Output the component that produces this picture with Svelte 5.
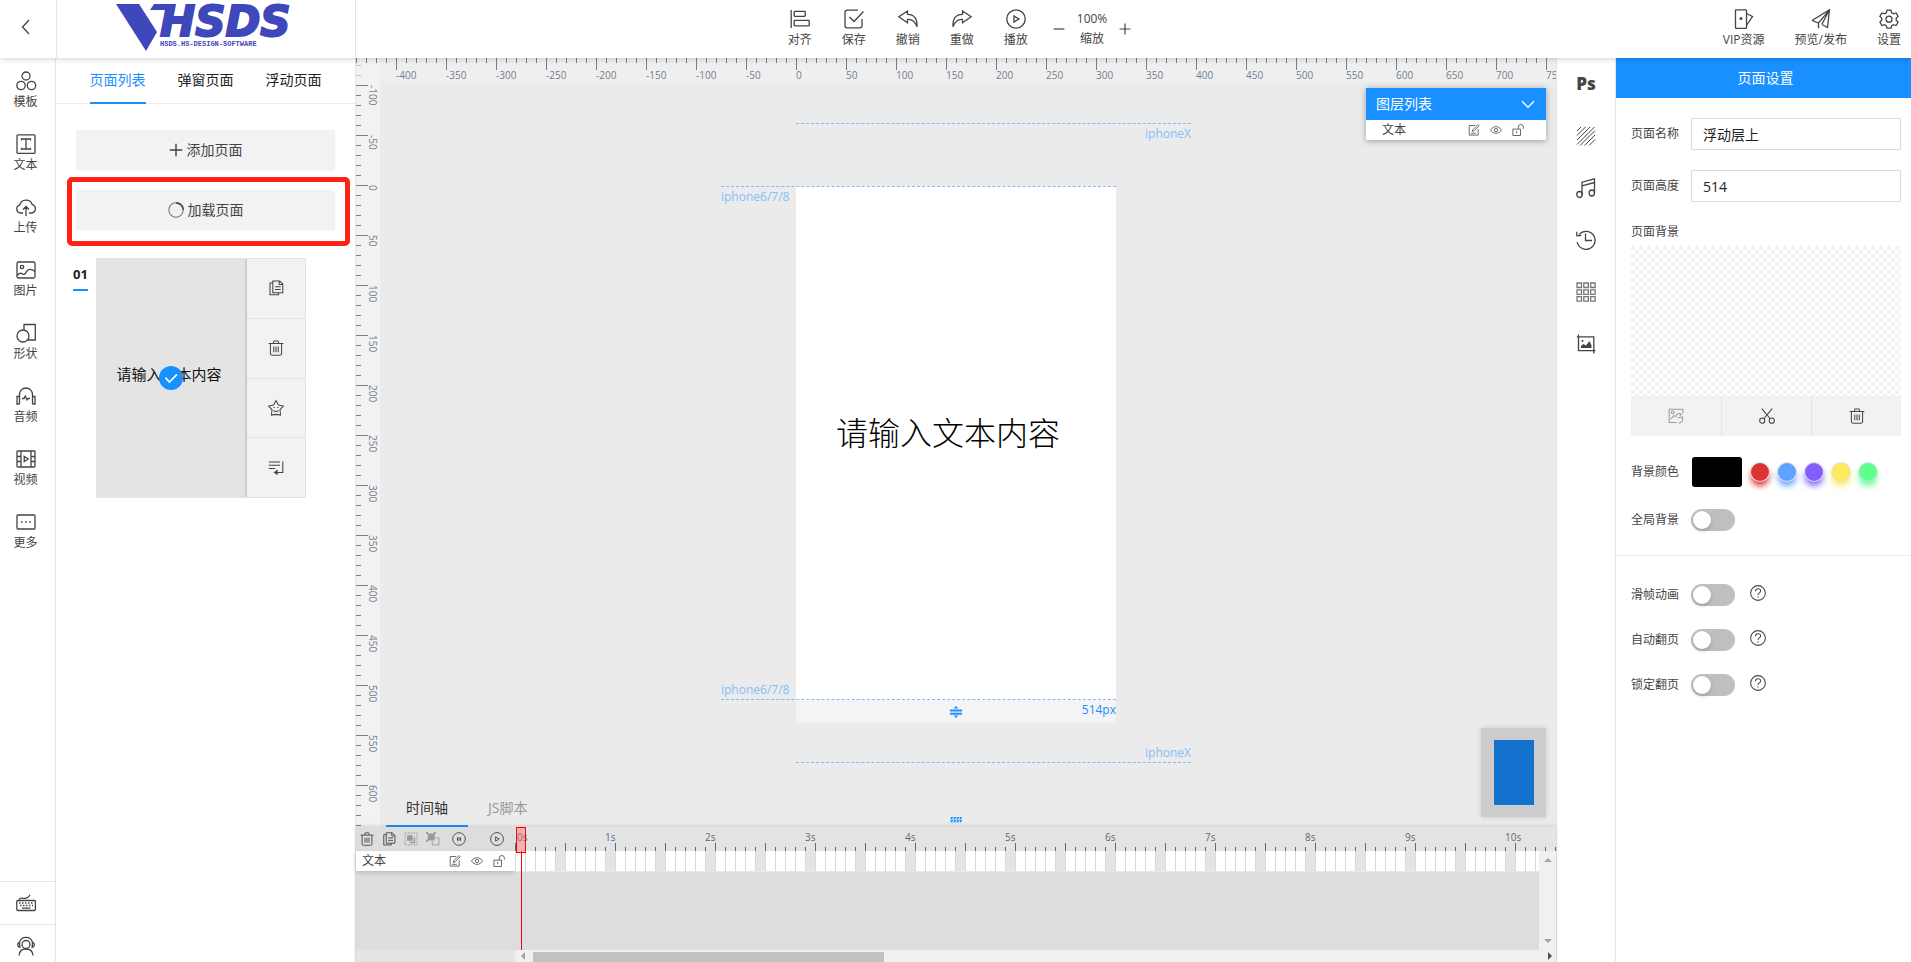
<script>
  const icons = {
    back: '<path d="M13 3L6.500 10l6.500 7"/>',
    template:
      '<circle cx="10" cy="5" r="4"/><circle cx="5" cy="14.500" r="4.200"/><circle cx="15.500" cy="14.500" r="4.200"/>',
    text: '<rect x="1" y="0.800" width="18" height="18.600" rx="1"/><path d="M5.500 6.500V5h9v1.500M10 5v10M5.500 13.800V15h9v-1.200"/>',
    upload:
      '<path d="M7 16H4.500A4 4 0 0 1 3.600 8.200 6.600 6.600 0 0 1 16.300 7.600 4.300 4.300 0 0 1 15.500 16H13M10 19v-9M7 12.500l3-3 3 3"/>',
    image:
      '<rect x="1" y="2" width="18" height="16" rx="1.500"/><circle cx="6" cy="7" r="1.700"/><path d="M1 15.500c2-2.500 3.500-3 5.500-1.500s3-1 4.500-3 4-2.500 8 .5"/>',
    shape: '<circle cx="7" cy="13" r="6"/><path d="M8 7V1.500h11.300V17H12"/>',
    audio:
      '<path d="M3.500 18V8.500a6.500 6.500 0 0 1 13 0V18M3.500 10.500H1V18h2.500M16.500 10.500H19V18h-2.500M6 12.500h2l1.300-2.500 1.700 4 1-1.500h2"/>',
    video:
      '<rect x="1" y="2" width="18" height="16" rx="0.800"/><path d="M5 2v16M15 2v16M1 7.500h4M1 12.500h4M15 7.500h4M15 12.500h4M8.200 7.500v5l4-2.500z"/>',
    more: '<rect x="1" y="3" width="18" height="14" rx="1"/><path class="fill" d="M5 9.200h1.600v1.600H5zM9.200 9.200h1.600v1.600H9.200zM13.400 9.200H15v1.600h-1.600z"/>',
    keyboard:
      '<rect x="0.800" y="7.500" width="18.600" height="10" rx="1"/><path d="M3 7.500c.5-3 2-2.500 4-2.200s5 .5 7-3.500M6 15.200h8.500"/><path stroke-dasharray="1.500 1.500" d="M3 10h14.500M4 12.500h13"/>',
    service:
      '<circle cx="10" cy="8.500" r="4"/><path d="M3 19.500c.3-4 3-6.500 7-6.500s6.700 2.500 7 6.500M3.500 6.500a6.700 6.700 0 0 1 13 0M3.500 6.200c-2.500.8-2.500 4.500.3 5.300zM16.500 6.200c2.500.8 2.500 4.500-.3 5.300z"/>',
    align:
      '<path d="M1.200 1v18"/><rect x="4.200" y="2.300" width="11" height="5" rx="0.500"/><rect x="4.200" y="11.300" width="15" height="5.600" rx="0.500"/>',
    save: '<path d="M14 1.200H3a2 2 0 0 0-2 2v13.600a2 2 0 0 0 2 2h13a2 2 0 0 0 2-2V10M5.500 8l4.500 4.500L19.500 2.500"/>',
    undo: '<path d="M9.500 2L.8 7.800l8.700 6V10.500c4.500-.5 7.500 2 9.500 7.200C19.500 9.500 16 5.300 9.500 5.300z"/>',
    redo: '<path d="M10.500 2l8.700 5.800-8.700 6V10.500c-4.500-.5-7.500 2-9.500 7.200C.5 9.500 4 5.300 10.500 5.300z"/>',
    play: '<circle cx="10" cy="10" r="9.200"/><path d="M8 7v6l5-3z"/>',
    pause: '<circle cx="10" cy="10" r="9"/><path d="M8.200 7.500v5M11.800 7.500v5" stroke-width="2"/>',
    minus: '<path stroke-width="2" d="M1 10h18"/>',
    plus: '<path stroke-width="2" d="M1 10h18M10 1v18"/>',
    vip: '<rect x="1.500" y="0.800" width="11" height="18.500" rx="0.500"/><path d="M12.500 4.500l6 3-6 9"/><circle class="fill" cx="7" cy="9.500" r="1.500"/>',
    send: '<path d="M1 11.500L18.500.8 16.500 18.500l-5-2.800M1 11.500l6.500 2.500L18.500.8M7.500 14v5.200M18.500.8L10.800 15.500"/>',
    gear: '<path d="M8 1.200h4l.7 2.600 1.800 1 2.600-.8 2 3.500-1.900 1.800v1.900l1.900 1.800-2 3.500-2.600-.8-1.800 1-.7 2.500H8l-.7-2.500-1.800-1-2.600.8-2-3.500 1.900-1.800V9.300L.9 7.500 2.900 4l2.600.8 1.800-1z"/><circle cx="10" cy="10.200" r="3"/>',
    spin: '<path d="M19 10a9 9 0 1 1-9-9" stroke-opacity="0.700"/><path d="M10 1a9 9 0 0 1 9 9" stroke-width="2.200"/>',
    copy: '<path d="M6 3.800H2.500v14.700h10.700V16"/><path d="M6 1.200h8.500L18.500 5v11H6zM14 1.200V5.500h4.500M8.800 8.500h7M8.800 12h7"/>',
    trash:
      '<path d="M.8 4.500h18.400M3 4.500V17a2 2 0 0 0 2 2h10a2 2 0 0 0 2-2V4.500M6.500 4.200L7.500 1.200h5l1 3M7.200 8.200v7M10 8.200v7M12.800 8.200v7"/>',
    star: '<path d="M10 .8l3 5.400 6.200 1.300-4.200 4.700.7 6.600-5.700-.8-5.700.8.700-6.600L.8 7.500 7 6.200z"/><path d="M7 9.500h1.500M11.500 9.500H13M7 13c1.500 1.800 4.500 1.800 6 0"/>',
    insert:
      '<path d="M1 2.500h14M1 6.500h14M1 10.500h8M18.500 1.500v14h-8"/><path class="fill" d="M7 15.500l5-3.500v7z"/>',
    check: '<path d="M3 9.500l5 5.500 9.500-9.500"/>',
    down: '<path d="M1.500 6l8.500 8.500L18.500 6"/>',
    edit: '<path d="M12 2.500H2v16h15V9M8 9.500L16.500 1l2 2L10 11.500l-2.800 1zM5 15.500h8"/>',
    eye: '<path d="M.8 10C5.500 2.500 14.500 2.500 19.200 10c-4.700 7.500-13.700 7.500-18.400 0z"/><circle cx="10" cy="10" r="2.800"/>',
    unlock: '<rect x="1.500" y="8.500" width="12.500" height="10.500"/><path d="M10.500 8.500V5a4.200 4.200 0 0 1 8.400 0v3M7.800 11.500v4"/>',
    group:
      '<path stroke-dasharray="2.500 1.500" d="M1.500 1.500h17v17h-17z"/><path class="fill" d="M4.500 4.500h8v8h-8zM14 8v6H8v2h8V8z"/>',
    ungroup:
      '<path class="fill" d="M2.500 2h10v10h-10zM0 0h3v3H0zM11 0h3v3h-3zM0 11h3v3H0z"/><path d="M14 8.500h4.500V18.500H9v-5"/>',
    hatch: '<path d="M1 5l4-4M1 9.500L9.500 1M1 14L14 1M1 18.500L18.500 1M4 19.500L19 4.500M8.500 19.500L19 9M13 19.500l6-6"/>',
    music:
      '<path d="M6 17V4.200L18.500.8V15M6 7.800l12.500-3.300"/><ellipse cx="3.500" cy="16.500" rx="2.700" ry="3"/><ellipse cx="15.800" cy="15" rx="2.700" ry="3"/>',
    history: '<path d="M3.200 4.500a9 9 0 1 1-2 7.500M9.500 3.500v7h6.500M.8 1.800v3.800h4.500"/>',
    grid: '<path d="M1 1h4.500v4.500H1zM7.800 1h4.500v4.500H7.800zM14.600 1h4.500v4.500h-4.500zM1 7.800h4.500v4.500H1zM7.800 7.800h4.500v4.500H7.800zM14.600 7.800h4.500v4.500h-4.500zM1 14.600h4.500v4.500H1zM7.800 14.600h4.500v4.500H7.800zM14.600 14.600h4.500v4.500h-4.500z"/>',
    crop: '<path d="M.8 2.800h17v14.400M2.500.5v16.200h17M17.800 17v2.500"/><path class="fill" d="M5 14v-2l2.500-2 2.500 1.500L13.500 7l2 4.500V14z"/><circle class="fill" cx="6.500" cy="7" r="1"/>',
    replace:
      '<path d="M11 18H1.500V1.500h17V7M3.500 14l4-4.500 3 1.500"/><circle cx="6" cy="5.500" r="1.700"/><path d="M10 10c1-3.500 5-4 6.500-2l-2 2M12 12.500l6-1.500c1.500 4-.5 7-4.500 8"/>',
    scissors:
      '<path d="M3.500.8l10.800 13M16.500.8L5.700 13.800"/><circle cx="4" cy="15.800" r="3.200"/><circle cx="16" cy="15.800" r="3.200"/>',
    help: '<circle cx="10" cy="10" r="9.200"/><path d="M6.800 7.800c0-4.300 6.500-4.200 6.500-.4 0 2.500-3.300 2.500-3.300 5.100M10 14v1.500"/>',
    resize:
      '<path stroke-width="3.300" d="M0 7.500h20M0 12.800h20"/><path class="fill" d="M10 0l4 4H6zM10 20l4-4H6z"/>'
  };

  const navItems = [
    { icon: 'template', label: '模板' },
    { icon: 'text', label: '文本' },
    { icon: 'upload', label: '上传' },
    { icon: 'image', label: '图片' },
    { icon: 'shape', label: '形状' },
    { icon: 'audio', label: '音频' },
    { icon: 'video', label: '视频' },
    { icon: 'more', label: '更多' }
  ];

  const actions = [
    { icon: 'align', label: '对齐' },
    { icon: 'save', label: '保存' },
    { icon: 'undo', label: '撤销' },
    { icon: 'redo', label: '重做' },
    { icon: 'play', label: '播放' }
  ];

  const publishActions = [
    { icon: 'vip', label: 'VIP资源' },
    { icon: 'send', label: '预览/发布' },
    { icon: 'gear', label: '设置' }
  ];

  const pageActions = [
    { icon: 'copy', label: '复制' },
    { icon: 'trash', label: '删除' },
    { icon: 'star', label: '收藏' },
    { icon: 'insert', label: '插入' }
  ];

  const tools = ['hatch', 'music', 'history', 'grid', 'crop'];
  const swatches = ['#db3232', '#5ea2ff', '#825eff', '#ffe95c', '#5eff8f'];
  const pageTabs = ['页面列表', '弹窗页面', '浮动页面'];
  const turnOptions = ['滑帧动画', '自动翻页', '锁定翻页'];

  // the first mark of each ruler has no label
  const range = (from, to) => {
    let list = [''];
    for (let i = from + 50; i <= to; i += 50) list.push(i);
    return list;
  };
  const rulerX = range(-450, 750);
  const rulerY = range(-150, 600);
  const seconds = Array.from({ length: 11 }, (_, i) => i);

  let activeTab = $state('页面列表');
  let pageName = $state('浮动层上');
  let pageHeight = $state('514');
  let bgColor = $state('#000000');
</script>

{#snippet icon(name, size = 20)}
  <svg class="icon" width={size} height={size} viewBox="0 0 20 20" aria-hidden="true">
    {@html icons[name]}
  </svg>
{/snippet}

{#snippet layerIcons()}
  <span class="layer-icons">
    <button aria-label="编辑">{@render icon('edit', 12)}</button>
    <button aria-label="显示">{@render icon('eye', 12)}</button>
    <button aria-label="锁定">{@render icon('unlock', 12)}</button>
  </span>
{/snippet}

<div class="app">
  <header class="header">
    <div class="header-left">
      <button class="back" aria-label="返回">{@render icon('back')}</button>
      <a class="brand" href="/" aria-label="VHSDS">
        <svg width="184" height="50" viewBox="0 0 184 50">
          <path d="M0 0h23l18 28-11 19z" />
          <path d="M38 0h21l-4 6H34z" />
          <text class="brand-name" x="44" y="32">HSDS</text>
          <text class="brand-tag" x="44" y="42">HSDS.HS-DESIGN-SOFTWARE</text>
        </svg>
      </a>
    </div>
    <div class="actions middle">
      {#each actions as item}
        <button class="action">{@render icon(item.icon)}<span>{item.label}</span></button>
      {/each}
      <div class="zoom">
        <button aria-label="缩小">{@render icon('minus', 12)}</button>
        <div class="zoom-value"><span>100%</span><span>缩放</span></div>
        <button aria-label="放大">{@render icon('plus', 12)}</button>
      </div>
    </div>
    <div class="actions end">
      {#each publishActions as item}
        <button class="action">{@render icon(item.icon)}<span>{item.label}</span></button>
      {/each}
    </div>
  </header>

  <div class="body">
    <nav class="nav">
      {#each navItems as item}
        <button class="nav-item">{@render icon(item.icon)}<span>{item.label}</span></button>
      {/each}
      <div class="nav-foot">
        <button aria-label="快捷键">{@render icon('keyboard')}</button>
        <button aria-label="客服">{@render icon('service')}</button>
      </div>
    </nav>

    <aside class="pages">
      <div class="tabs">
        {#each pageTabs as tab}
          <button class:active={activeTab === tab} onclick={() => (activeTab = tab)}>{tab}</button>
        {/each}
      </div>
      <div class="page-buttons">
        <button class="wide">{@render icon('plus', 14)}添加页面</button>
        <div class="marked">
          <button class="wide">{@render icon('spin', 16)}加载页面</button>
        </div>
      </div>
      <div class="page-item">
        <div class="page-no">01</div>
        <div class="page-card">
          <div class="thumb">
            <span>请输入文本内容</span>
            <i class="badge">{@render icon('check', 16)}</i>
          </div>
          <div class="page-actions">
            {#each pageActions as item}
              <button aria-label={item.label}>{@render icon(item.icon, 16)}</button>
            {/each}
          </div>
        </div>
      </div>
    </aside>

    <main class="center">
      <section class="stage">
        <div class="ruler-y">
          {#each rulerY as n}
            <div class="cell">{n}</div>
          {/each}
        </div>
        <div class="ruler-x">
          <div class="strip">
            {#each rulerX as n}
              <div class="cell">{n}</div>
            {/each}
          </div>
        </div>
        <div class="workspace">
          <div class="artboard">
            <p>请输入文本内容</p>
            <div class="guide right top-x"><span>iphoneX</span></div>
            <div class="guide left top-6"><span>iphone6/7/8</span></div>
            <div class="guide left bottom-6"><span>iphone6/7/8</span></div>
            <div class="guide right bottom-x"><span>iphoneX</span></div>
            <div class="height-bar">
              {@render icon('resize', 12)}
              <span>514px</span>
            </div>
          </div>
        </div>

        <div class="layers">
          <div class="layers-head">
            <span>图层列表</span>
            <button aria-label="收起">{@render icon('down', 14)}</button>
          </div>
          <div class="layers-row"><span>文本</span>{@render layerIcons()}</div>
        </div>
        <div class="minimap"><div></div></div>
        <div class="grip"></div>
        <div class="stage-tabs">
          <button class="active">时间轴</button>
          <button>JS脚本</button>
        </div>
      </section>

      <section class="timeline">
        <div class="tl-left">
          <div class="tl-tools">
            <button aria-label="删除">{@render icon('trash', 14)}</button>
            <button aria-label="复制">{@render icon('copy', 14)}</button>
            <button class="off" aria-label="组合">{@render icon('group', 14)}</button>
            <button class="off" aria-label="取消组合">{@render icon('ungroup', 14)}</button>
            <button class="gap" aria-label="暂停">{@render icon('pause', 14)}</button>
            <button class="last" aria-label="播放">{@render icon('play', 14)}</button>
          </div>
          <div class="tl-row"><span>文本</span>{@render layerIcons()}</div>
        </div>
        <div class="tl-right">
          <div class="tl-ruler">
            {#each seconds as s}
              <div class="second"><span>{s}s</span></div>
            {/each}
          </div>
          <div class="tl-main">
            <div class="tl-track"><div class="frames"></div></div>
            <div class="vbar"><i class="up"></i><i class="down"></i></div>
          </div>
          <div class="playhead"></div>
        </div>
        <div class="hbar"><i class="prev"></i><div class="thumb-bar"></div><i class="next"></i></div>
      </section>
    </main>

    <div class="tools">
      <button class="ps">Ps</button>
      {#each tools as name}
        <button class={name} aria-label={name}>{@render icon(name)}</button>
      {/each}
    </div>

    <aside class="settings">
      <h2>页面设置</h2>
      <div class="group">
        <div class="field">
          <label for="page-name">页面名称</label>
          <input id="page-name" type="text" bind:value={pageName} />
        </div>
        <div class="field">
          <label for="page-height">页面高度</label>
          <input id="page-height" type="text" bind:value={pageHeight} />
        </div>
        <div class="caption">页面背景</div>
        <div class="checker"></div>
        <div class="bg-actions">
          <button class="off" aria-label="更换">{@render icon('replace', 16)}</button>
          <button aria-label="裁剪">{@render icon('scissors', 16)}</button>
          <button aria-label="删除">{@render icon('trash', 16)}</button>
        </div>
        <div class="field colors">
          <label for="bg-color">背景颜色</label>
          <input id="bg-color" type="color" bind:value={bgColor} />
          {#each swatches as color}
            <button
              class="swatch"
              aria-label={color}
              style="--swatch: {color}"
              onclick={() => (bgColor = color)}></button>
          {/each}
        </div>
        <div class="field global">
          <label for="bg-global">全局背景</label>
          <input id="bg-global" class="switch" type="checkbox" />
        </div>
      </div>
      <div class="group turn">
        {#each turnOptions as name, i}
          <div class="field">
            <label for="turn-{i}">{name}</label>
            <input id="turn-{i}" class="switch" type="checkbox" />
            <button class="help" aria-label="帮助">{@render icon('help', 16)}</button>
          </div>
        {/each}
      </div>
    </aside>
  </div>
</div>

<style>
  :global(body) {
    overflow: hidden;
  }

  .app {
    display: flex;
    flex-direction: column;
    height: 100vh;
    font-family: 'Open Sans', 'Noto Sans CJK SC', sans-serif;
    font-size: 12px;
    line-height: 20px;
    color: #444;
    background: #fff;
  }

  .app * {
    box-sizing: border-box;
  }

  button {
    display: flex;
    align-items: center;
    justify-content: center;
    padding: 0;
    border: 0;
    background: none;
    color: inherit;
    font: inherit;
    cursor: pointer;
  }

  .icon {
    display: block;
    flex: none;
    fill: none;
    stroke: currentColor;
    stroke-width: 1.3;
    overflow: visible;
  }

  .icon :global(.fill) {
    fill: currentColor;
    stroke: none;
  }

  /* header */
  .header {
    position: relative;
    z-index: 5;
    display: grid;
    grid-template-columns: 1fr auto 1fr;
    flex: none;
    height: 58px;
    box-shadow: 0 1px 6px rgba(0, 0, 0, 0.18);
    background: #fff;
  }

  .header-left {
    display: flex;
  }

  .back {
    width: 56px;
    padding: 0 4px 4px 0;
  }

  .brand {
    display: flex;
    justify-content: center;
    width: 300px;
    padding: 4px 0 0 4px;
    border-left: 1px solid #e4e4e4;
    border-right: 1px solid #e4e4e4;
    fill: #3f48bb;
  }

  .brand svg {
    overflow: visible;
  }

  .brand-name {
    font: italic bold 42px 'DejaVu Sans', sans-serif;
    stroke: #3f48bb;
    stroke-width: 2;
  }

  .brand-tag {
    font: bold 7px 'Liberation Mono', monospace;
  }

  .actions {
    display: flex;
    gap: 30px;
    padding-top: 9px;
    align-items: flex-start;
  }

  .actions.middle {
    padding-left: 8px;
  }

  .actions.end {
    justify-content: flex-end;
    padding-right: 10px;
  }

  .action {
    flex-direction: column;
    gap: 1px;
  }

  .zoom {
    display: flex;
    align-items: center;
    gap: 12px;
    margin-left: -5px;
  }

  .zoom-value {
    display: flex;
    flex-direction: column;
    align-items: center;
  }

  .body {
    display: flex;
    flex: 1;
    min-height: 0;
  }

  /* left navigation */
  .nav {
    display: flex;
    flex-direction: column;
    flex: none;
    width: 56px;
    border-right: 1px solid #e4e4e4;
  }

  .nav-item {
    flex-direction: column;
    gap: 1px;
    height: 63px;
    padding: 4px 4px 0 0;
  }

  .nav-foot {
    margin: auto 0 -5px;
  }

  .nav-foot button {
    width: 100%;
    height: 43px;
    padding-right: 4px;
    border-top: 1px solid #e4e4e4;
  }

  /* page list */
  .pages {
    flex: none;
    width: 300px;
    border-right: 1px solid #e4e4e4;
  }

  .tabs {
    display: flex;
    justify-content: center;
    gap: 32px;
    height: 46px;
    border-bottom: 1px solid #ececec;
    font-size: 14px;
    color: #222;
  }

  .tabs button {
    height: 46px;
    border-bottom: 2px solid transparent;
  }

  .tabs .active {
    border-color: #1890ff;
    color: #1890ff;
  }

  .page-buttons {
    display: flex;
    flex-direction: column;
    gap: 20px;
    padding: 26px 20px 28px;
  }

  .wide {
    gap: 4px;
    width: 100%;
    height: 40px;
    border-radius: 2px;
    background: #f2f2f2;
    box-shadow: 0 1px 2px rgba(0, 0, 0, 0.04);
    font-size: 14px;
  }

  .marked {
    position: relative;
  }

  .marked::after {
    content: '';
    position: absolute;
    inset: -13px -15px -16px -9px;
    border: 5px solid #ff2114;
    border-radius: 5px;
    pointer-events: none;
  }

  .page-item {
    display: flex;
    gap: 8px;
    padding-left: 17px;
  }

  .page-no {
    width: 15px;
    height: 33px;
    padding-top: 6px;
    border-bottom: 2px solid #1890ff;
    color: #222;
    font-size: 13px;
    font-weight: 700;
  }

  .page-card {
    display: flex;
    height: 240px;
    border: 1px solid #e4e4e4;
  }

  .thumb {
    position: relative;
    display: flex;
    align-items: center;
    justify-content: center;
    width: 150px;
    padding: 0 4px 8px 0;
    border-right: 2px solid #ccc;
    background: #e4e4e4;
    color: #111;
    font-size: 15px;
  }

  .badge {
    position: absolute;
    top: calc(50% - 12px);
    left: calc(50% - 12px);
    display: grid;
    place-items: center;
    width: 24px;
    height: 24px;
    border-radius: 50%;
    background: #1890ff;
    color: #fff;
  }

  .badge .icon {
    stroke-width: 2;
  }

  .page-actions {
    display: flex;
    flex-direction: column;
    width: 58px;
    background: #f2f2f2;
  }

  .page-actions button {
    flex: 1;
  }

  .page-actions button + button {
    border-top: 1px solid #e4e4e4;
  }

  /* stage */
  .center {
    display: flex;
    flex: 1;
    flex-direction: column;
    min-width: 0;
    background: #ebebeb;
  }

  .stage {
    position: relative;
    display: grid;
    grid-template-columns: 24px minmax(0, 1fr);
    grid-template-rows: 24px minmax(0, 1fr);
    flex: 1;
    min-height: 0;
    overflow: hidden;
  }

  .ruler-x,
  .ruler-y {
    background: #f2f2f2;
    color: #71808f;
    font-size: 10px;
    line-height: 10px;
  }

  .ruler-x {
    display: flex;
    grid-area: 1 / 1 / 2 / 3;
    justify-content: center;
    overflow: hidden;
    background: rgba(242, 242, 242, 0.6);
  }

  .strip {
    display: flex;
    flex: none;
    padding-left: 30px;
  }

  .ruler-x .cell {
    flex: none;
    width: 50px;
    padding-top: 12px;
    background:
      linear-gradient(#71808f, #71808f) 0 0 / 1px 12px no-repeat,
      linear-gradient(90deg, #71808f 1px, transparent 1px) 0 0 / 10px 5px repeat-x;
  }

  .ruler-y {
    grid-area: 1 / 1 / 3 / 2;
    overflow: hidden;
  }

  .ruler-y .cell {
    width: 24px;
    height: 50px;
    padding-left: 12px;
    writing-mode: vertical-rl;
    background:
      linear-gradient(#71808f, #71808f) 0 0 / 12px 1px no-repeat,
      linear-gradient(#71808f 1px, transparent 1px) 0 0 / 5px 10px repeat-y;
  }

  .ruler-y .cell {
    padding-right: 2px;
    padding-left: 10px;
  }

  .ruler-y .cell:first-child {
    margin-top: -23px;
  }

  .workspace {
    display: flex;
    grid-area: 1 / 1 / 3 / 3;
    justify-content: center;
    padding-top: 128px;
  }

  .artboard {
    position: relative;
    display: flex;
    align-items: center;
    justify-content: center;
    width: 320px;
    height: 514px;
    background: #fff;
    color: #000;
    font-size: 32px;
    font-weight: 300;
  }

  .artboard p {
    margin: 0;
    padding: 0 16px 20px 0;
  }

  .guide {
    position: absolute;
    display: flex;
    width: 395px;
    color: #84bff8;
    font-size: 12px;
    font-weight: 400;
    line-height: 20px;
  }

  .guide.left {
    right: 0;
  }

  .guide.right {
    left: 0;
    justify-content: flex-end;
  }

  .top-x,
  .top-6 {
    border-top: 1px dashed #7fbcf7;
  }

  .bottom-x,
  .bottom-6 {
    border-bottom: 1px dashed #7fbcf7;
    line-height: 18px;
  }

  .top-x {
    top: -63px;
  }

  .top-6 {
    top: 0;
  }

  .bottom-6 {
    bottom: 0;
  }

  .bottom-x {
    bottom: -63px;
  }

  .height-bar {
    position: absolute;
    top: 100%;
    display: grid;
    grid-template-columns: 1fr auto 1fr;
    align-items: center;
    width: 100%;
    height: 23px;
    background: #f4f4f4;
    color: #1890ff;
    font-size: 12px;
    font-weight: 400;
    line-height: 20px;
  }

  .height-bar .icon {
    grid-column: 2;
  }

  .height-bar span {
    align-self: start;
    text-align: right;
  }

  .layers {
    position: absolute;
    top: 30px;
    right: 10px;
    width: 180px;
    background: #fff;
    box-shadow: 0 1px 6px rgba(0, 0, 0, 0.35);
  }

  .layers-head {
    display: flex;
    align-items: center;
    justify-content: space-between;
    height: 32px;
    padding: 0 11px 0 10px;
    background: #1890ff;
    color: #fff;
    font-size: 14px;
  }

  .layers-head .icon {
    stroke-width: 2;
  }

  .layers-row {
    display: flex;
    justify-content: space-between;
    height: 20px;
    padding: 0 22px 0 16px;
  }

  .layer-icons {
    display: flex;
    gap: 10px;
  }

  .minimap {
    position: absolute;
    right: 10px;
    bottom: 10px;
    width: 65px;
    height: 89px;
    padding: 12px 12px 12px 13px;
    background: #ccc;
    box-shadow: 0 0 5px rgba(0, 0, 0, 0.15);
  }

  .minimap div {
    height: 100%;
    background: #1472cf;
  }

  .grip {
    position: absolute;
    bottom: 4px;
    left: calc(50% - 6px);
    width: 12px;
    height: 6px;
    background: conic-gradient(#1890ff 25%, transparent 0) 0 0 / 3px 3px;
    background-color: #a5d0fa;
  }

  .stage-tabs {
    position: absolute;
    bottom: 0;
    left: 30px;
    display: flex;
    font-size: 14px;
    color: #999;
  }

  .stage-tabs button {
    height: 36px;
    padding: 0 20px;
    border-bottom: 2px solid transparent;
  }

  .stage-tabs .active {
    border-color: #1890ff;
    color: #333;
  }

  /* timeline */
  .timeline {
    position: relative;
    display: grid;
    grid-template-columns: 159px minmax(0, 1fr);
    grid-template-rows: 123px 12px;
    flex: none;
    background: #ddd;
    box-shadow: 0 -1px 4px rgba(0, 0, 0, 0.12);
  }

  .tl-tools {
    display: flex;
    align-items: center;
    gap: 8px;
    height: 24px;
    padding: 0 11px 0 4px;
  }

  .tl-tools .gap {
    margin-left: 4px;
  }

  .tl-tools .last {
    margin-left: auto;
  }

  .off {
    color: #999;
  }

  .tl-row {
    display: flex;
    justify-content: space-between;
    height: 20px;
    padding: 0 10px 0 6px;
    background: #fff;
    box-shadow: 0 2px 4px rgba(0, 0, 0, 0.15);
  }

  .tl-right {
    position: relative;
    display: flex;
    flex-direction: column;
    min-width: 0;
  }

  .tl-ruler {
    display: flex;
    flex: none;
    height: 24px;
    overflow: hidden;
    background: #e4e4e4;
    color: #5b6b76;
    font-size: 10px;
  }

  .second {
    flex: none;
    width: 100px;
    background:
      linear-gradient(90deg, #5b6b76 1px, transparent 1px) 0 100% / 50px 8px repeat-x,
      linear-gradient(90deg, #5b6b76 1px, transparent 1px) 0 100% / 10px 4px repeat-x;
  }

  .second span {
    display: block;
    margin-left: -10px;
  }

  .second:first-child span {
    margin-left: 2px;
  }

  .tl-main {
    display: flex;
    flex: 1;
  }

  .tl-track {
    flex: 1;
  }

  .frames {
    height: 21px;
    border-bottom: 1px solid #e8e8e8;
    background:
      linear-gradient(90deg, transparent 41px, #e4e4e4 41px) 0 0 / 50px 100%,
      linear-gradient(90deg, #d5dada 1px, #fff 1px) 0 0 / 10px 100%;
  }

  .vbar {
    display: flex;
    flex-direction: column;
    align-items: center;
    justify-content: space-between;
    width: 17px;
    padding: 7px 0;
    background: #f0f0f0;
  }

  .vbar i,
  .hbar i {
    border: 4px solid transparent;
  }

  .vbar .up {
    border-top: 0;
    border-bottom-color: #a3a3a3;
  }

  .vbar .down {
    border-bottom: 0;
    border-top-color: #a3a3a3;
  }

  .playhead {
    position: absolute;
    top: 0;
    bottom: 0;
    left: 1px;
    width: 10px;
    background: linear-gradient(#f00, #f00) 5px 24px / 1px 100% no-repeat;
  }

  .playhead::before {
    content: '';
    display: block;
    height: 24px;
    border: 1px solid #f00;
    background: rgba(255, 90, 90, 0.35);
  }

  .hbar {
    display: flex;
    grid-column: 2;
    align-items: center;
    padding: 0 4px 0 6px;
    background: #f0f0f0;
  }

  .hbar::before {
    content: '';
    position: absolute;
    bottom: 0;
    left: 0;
    width: 159px;
    height: 12px;
    background: #e4e4e4;
  }

  .hbar .prev {
    border-left: 0;
    border-right-color: #a3a3a3;
  }

  .hbar .next {
    margin-left: auto;
    border-right: 0;
    border-left-color: #505050;
  }

  .thumb-bar {
    align-self: flex-end;
    width: 34%;
    height: 10px;
    margin-left: 8px;
    background: #c1c1c1;
  }

  /* tools next to the settings */
  .tools {
    display: flex;
    flex: none;
    flex-direction: column;
    gap: 32px;
    width: 60px;
    padding-top: 16px;
    border-left: 1px solid #e4e4e4;
    border-right: 1px solid #e4e4e4;
  }

  .tools button {
    height: 20px;
  }

  .tools .ps {
    font-size: 17px;
    font-weight: 800;
  }

  .tools .grid {
    color: #777;
  }

  .tools .hatch .icon {
    stroke-width: 1;
  }

  /* settings */
  .settings {
    flex: none;
    width: 295px;
  }

  .settings h2 {
    margin: 0;
    padding-left: 4px;
    background: #1890ff;
    color: #fff;
    font-size: 14px;
    font-weight: 400;
    line-height: 40px;
    text-align: center;
  }

  .group {
    padding: 20px 10px 14px 15px;
  }

  .field {
    display: flex;
    align-items: center;
    gap: 12px;
    margin-bottom: 20px;
  }

  .field input[type='text'] {
    flex: 1;
    min-width: 0;
    height: 32px;
    padding: 0 11px;
    border: 1px solid #d9d9d9;
    border-radius: 2px;
    color: #222;
    font: 14px 'Open Sans', 'Noto Sans CJK SC', sans-serif;
  }

  .caption {
    margin-bottom: 4px;
  }

  .checker {
    height: 150px;
    background: repeating-conic-gradient(#fff 0 25%, #f2f2f2 0 50%) 0 0 / 8px 8px;
  }

  .bg-actions {
    display: grid;
    grid-template-columns: repeat(3, 1fr);
    height: 40px;
    margin-bottom: 21px;
    background: #f2f2f2;
  }

  .bg-actions button + button {
    border-left: 1px solid #e4e4e4;
  }

  .colors {
    gap: 9px;
    margin-bottom: 22px;
  }

  .colors input {
    width: 50px;
    height: 30px;
    margin: 0 0 0 4px;
    padding: 0;
    border: 0;
    border-radius: 3px;
    background: none;
    overflow: hidden;
    appearance: none;
  }

  .colors input::-webkit-color-swatch-wrapper {
    padding: 0;
  }

  .colors input::-webkit-color-swatch {
    border: 0;
  }

  .swatch {
    width: 18px;
    height: 18px;
    border-radius: 50%;
    background: var(--swatch);
    box-shadow:
      0 0 0 1px #e0e0e0,
      0 5px 6px var(--swatch);
  }

  .global {
    margin-bottom: 10px;
  }

  .switch {
    width: 44px;
    height: 22px;
    margin: 0;
    padding: 2px;
    border-radius: 11px;
    background: #bfbfbf;
    appearance: none;
    cursor: pointer;
  }

  .switch::before {
    content: '';
    display: block;
    width: 18px;
    height: 18px;
    border-radius: 50%;
    background: #fff;
    box-shadow: 0 2px 4px rgba(0, 35, 11, 0.2);
  }

  .switch:checked {
    background: #1890ff;
  }

  .switch:checked::before {
    margin-left: auto;
  }

  .turn {
    padding-top: 28px;
    border-top: 1px solid #ececec;
  }

  .turn .field {
    height: 22px;
    margin-bottom: 23px;
  }

  .help {
    margin: 0 0 4px 3px;
  }
</style>
